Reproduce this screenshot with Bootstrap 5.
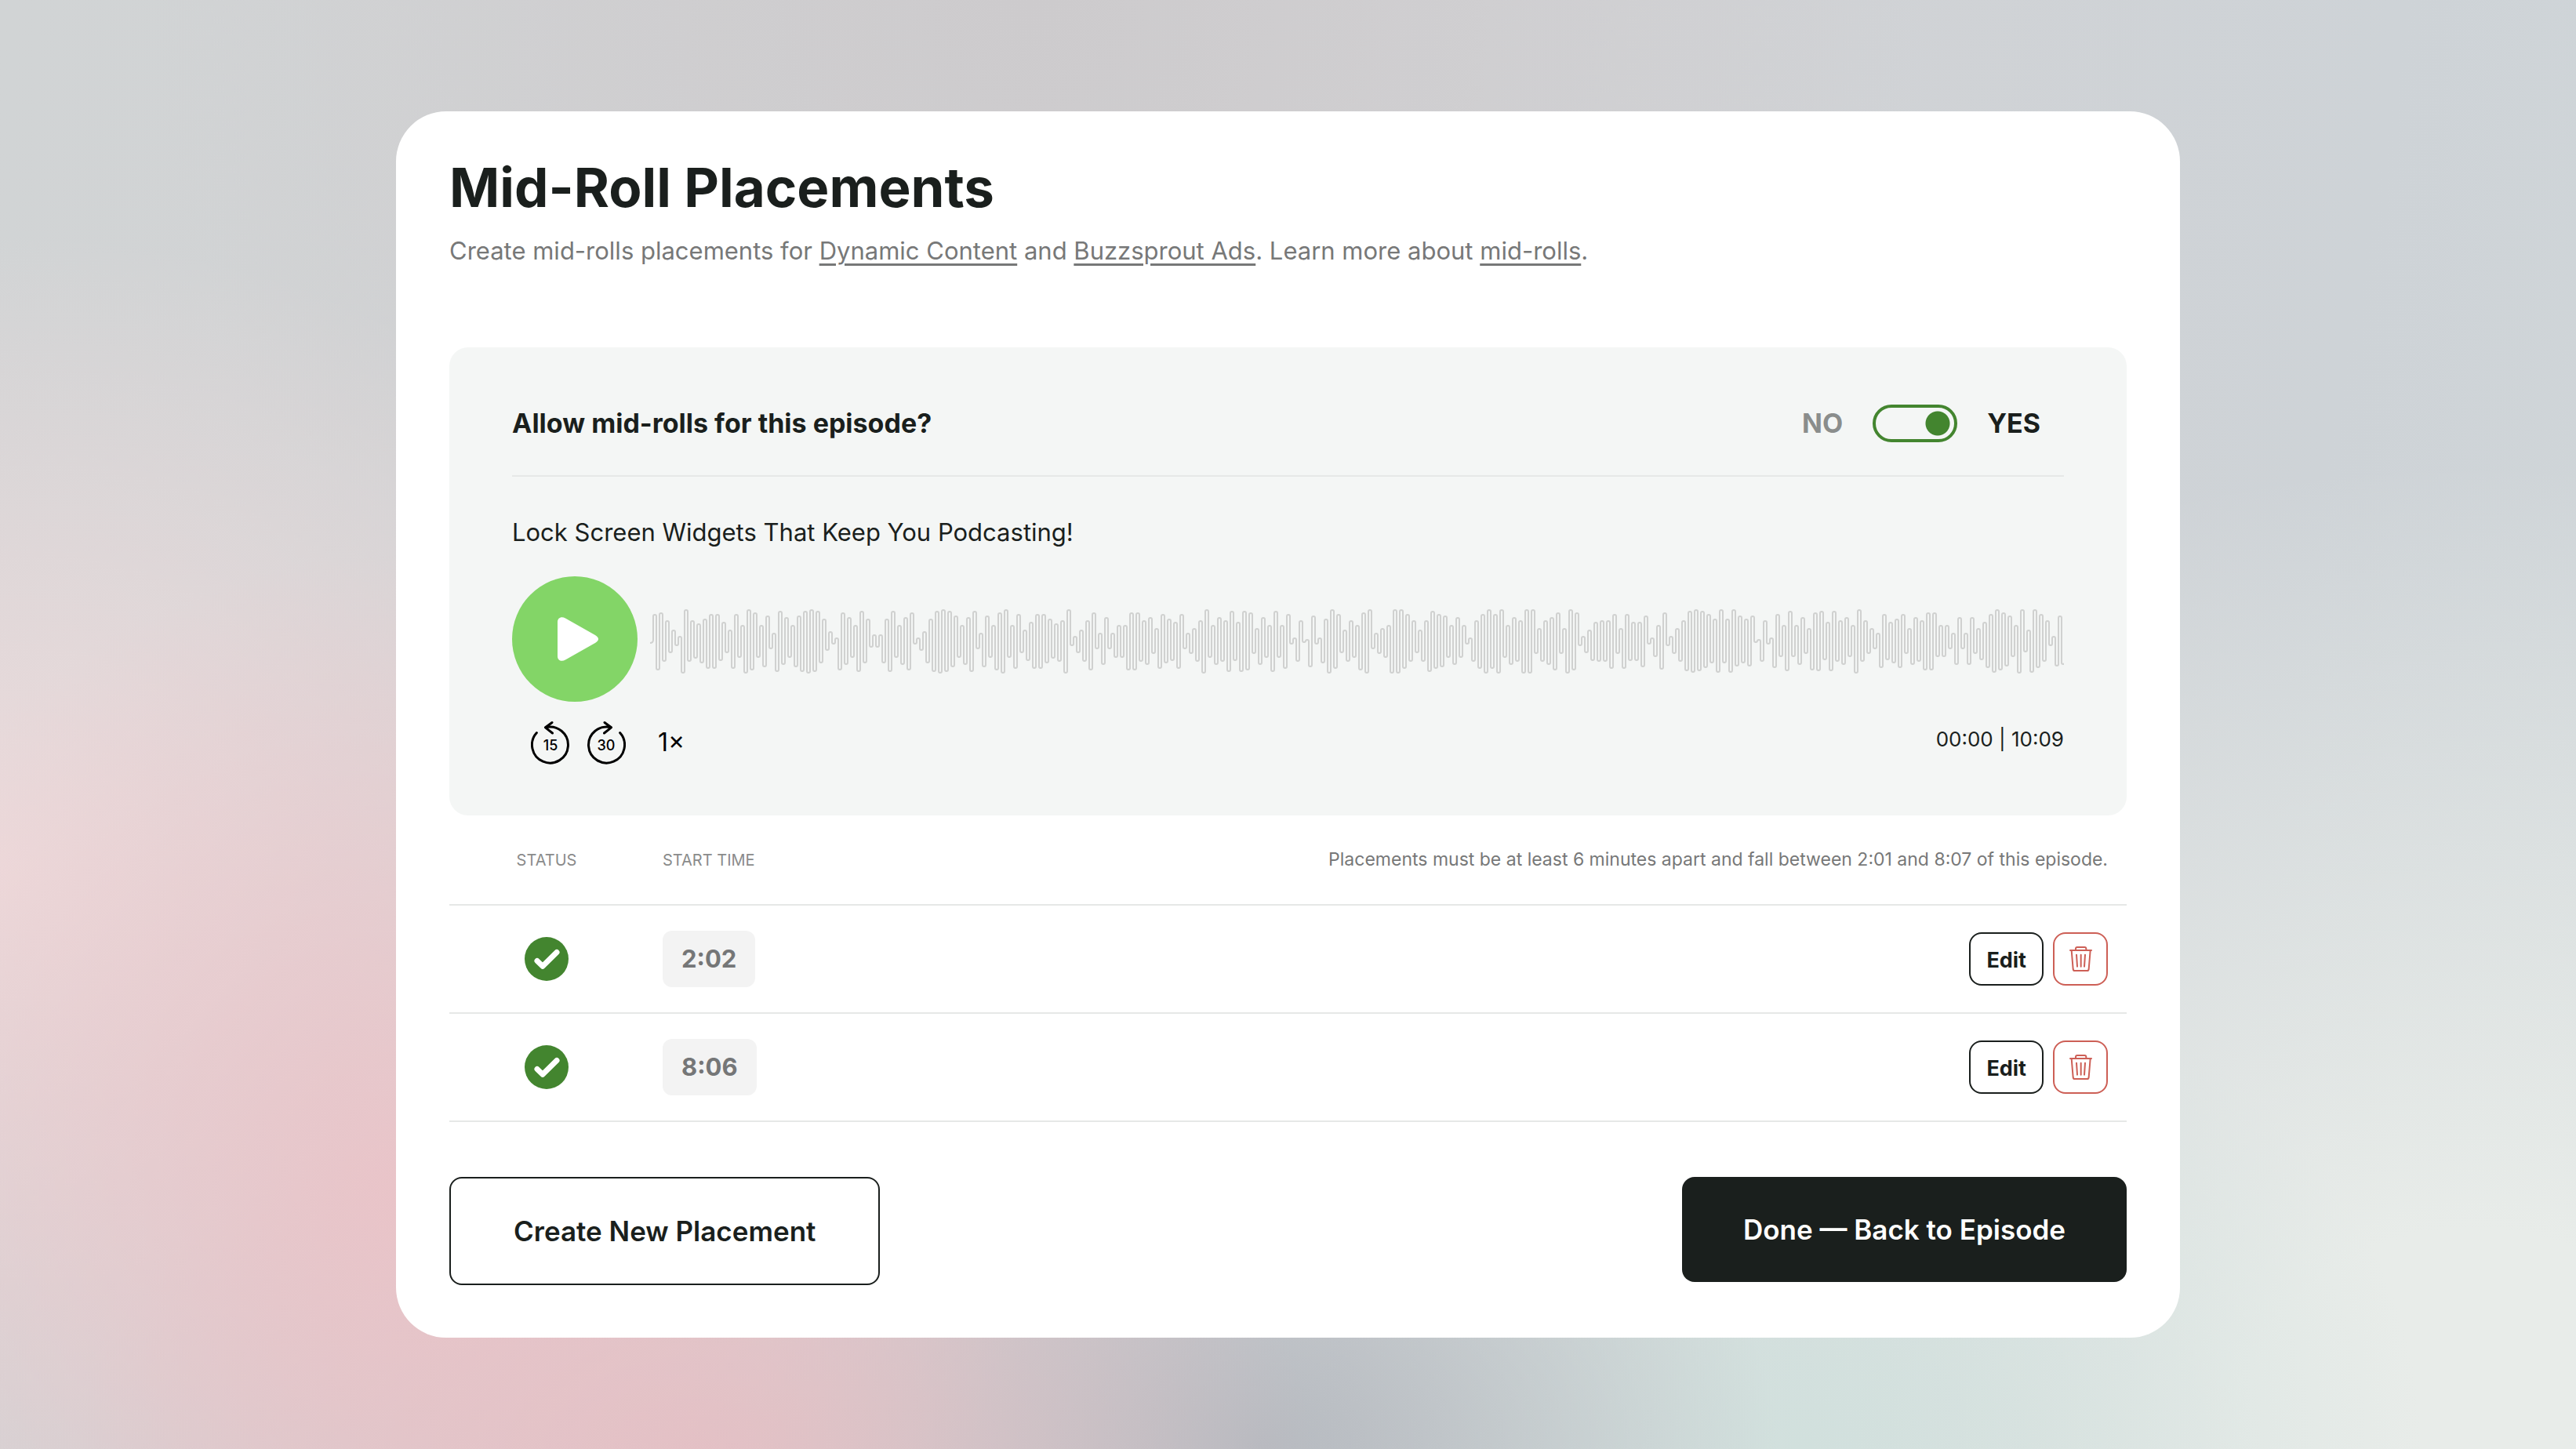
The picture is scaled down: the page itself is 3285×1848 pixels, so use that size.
<!DOCTYPE html>
<html lang="en">
<head>
<meta charset="utf-8">
<meta name="viewport" content="width=device-width, initial-scale=1">
<title>Mid-Roll Placements</title>
<link href="https://cdn.jsdelivr.net/npm/bootstrap@5.3.0/dist/css/bootstrap.min.css" rel="stylesheet">
<style>
  :root { --ink: #1a1f1d; --muted: #777878; --rule: #e6e8e7; --leaf: #43852f; --danger: #cd5f56; }
  body {
    font-family: Inter, "Liberation Sans", sans-serif;
    color: var(--ink);
    background:
      radial-gradient(ellipse 24% 44% at 16% 82%, rgba(235, 194, 199, .9), rgba(235, 194, 199, 0)),
      radial-gradient(ellipse 24% 26% at 27% 100%, rgba(226, 188, 193, .85), rgba(226, 188, 193, 0)),
      radial-gradient(ellipse 30% 44% at 0% 60%, rgba(238, 219, 220, .95), rgba(238, 219, 220, 0)),
      radial-gradient(ellipse 20% 26% at 49% 100%, rgba(182, 186, 192, 1), rgba(182, 186, 192, 0)),
      radial-gradient(ellipse 24% 36% at 70% 100%, rgba(209, 224, 221, 1), rgba(209, 224, 221, 0)),
      radial-gradient(ellipse 44% 66% at 96% 98%, rgba(232, 236, 233, 1) 20%, rgba(232, 236, 233, 0)),
      radial-gradient(ellipse 34% 60% at 40% 0%, rgba(205, 203, 205, 1), rgba(205, 203, 205, 0)),
      linear-gradient(100deg, #d1d4d5, #d3d2d4 45%, #ced3d7 85%, #d0d6d9);
  }
  .sheet { max-width: 2275px; border-radius: 64px; padding: 58px 68px 67px; }
  .sheet-title { font-size: 69px; line-height: 78px; font-weight: 700; margin-bottom: 18px; }
  .sheet-intro { font-size: 31px; line-height: 48px; color: var(--muted); margin-bottom: 99px; }
  .sheet-intro a { color: inherit; text-decoration-thickness: 3px; text-underline-offset: 5px; }
  .player { background: #f4f6f5; border-radius: 24px; padding: 73px 80px 65px; }
  .player-head { font-size: 34px; font-weight: 700; line-height: 48px; padding-bottom: 42px; border-bottom: 2px solid var(--rule); }
  .choice { gap: 38px; padding-right: 30px; }
  .choice-off { color: #8a8d8c; }
  .switch {
    appearance: none; width: 108px; height: 48px; margin: 0;
    border: 4px solid var(--leaf); border-radius: 24px;
    background: radial-gradient(circle 15px at 21px 50%, var(--leaf) 14px, transparent 15px);
  }
  .switch:checked { background: radial-gradient(circle 16px at 79px 50%, var(--leaf) 15px, transparent 16px); }
  .episode { font-size: 31px; line-height: 48px; margin: 47px 0 32px; }
  .play { width: 160px; height: 160px; background: #83d567; }
  .play svg { width: 52px; height: 56px; margin-left: 8px; }
  .wave { height: 88px; min-width: 0; }
  .controls { margin-top: 24px; padding-left: 24px; line-height: 48px; }
  .skip { width: 50px; height: 56px; margin-right: 21px; }
  .skip svg { width: 50px; height: 56px; }
  .skip text { font-size: 18px; font-weight: 500; }
  .speed { height: 56px; font-size: 32px; margin-left: 20px; color: #000; }
  .clock { font-size: 26px; }
  .slots { border-collapse: separate; border-spacing: 0; }
  .slots th, .slots td { border-bottom: 2px solid var(--rule); padding: 0 24px; height: 138px; vertical-align: middle; }
  .slots th { height: 115px; font-size: 20px; font-weight: 400; color: #8a8b8b; }
  .slots .slot-status { width: 248px; text-align: center; }
  .slots .slot-note { font-size: 23px; color: var(--muted); text-align: right; }
  .slot-ok { width: 56px; height: 56px; }
  .stamp { display: inline-block; background: #f3f3f3; color: #757677; border-radius: 12px; padding: 0 24px; font-size: 31px; line-height: 72px; font-weight: 700; }
  .slot-actions { gap: 12px; }
  .slot-btn { height: 68px; border: 2px solid var(--ink); border-radius: 16px; font-size: 27px; font-weight: 700; color: var(--ink); padding: 4px 20px 0; }
  .slot-bin { border-color: var(--danger); color: var(--danger); width: 70px; padding: 0; }
  .slot-bin svg { width: 29px; height: 32px; }
  .foot { margin-top: 70px; }
  .foot-btn { font-size: 35px; font-weight: 600; border-radius: 16px; border: 0; height: 134px; padding: 0 78px; background: var(--ink); color: #fff; }
  .foot-line { height: 138px; border: 2px solid var(--ink); background: #fff; color: var(--ink); padding: 0 80px; }
</style>
</head>
<body>
<svg class="d-none" xmlns="http://www.w3.org/2000/svg">
  <symbol id="tick" viewBox="0 0 56 56">
    <circle cx="28" cy="28" r="28" fill="#43852f"/>
    <path d="M16 30.500 23 37.300 41 19.500" fill="none" stroke="#fff" stroke-width="7" stroke-linecap="round" stroke-linejoin="round"/>
  </symbol>
  <symbol id="bin" viewBox="0 0 87 96">
    <g fill="none" stroke="currentColor" stroke-width="6" stroke-linecap="round" stroke-linejoin="round">
      <path d="M3 15H84M24 15V9Q24 3 30 3H58Q64 3 64 9V15M8 15 14 87Q15 93 20 93H68Q73 93 74 87L80 15"/>
      <path d="M27 32 30 77M44 32V77M60 32 57 77"/>
    </g>
  </symbol>
</svg>
<div class="min-vh-100 d-flex align-items-center justify-content-center">
  <main class="sheet bg-white w-100">
    <h1 class="sheet-title">Mid-Roll Placements</h1>
    <p class="sheet-intro">Create mid-rolls placements for <a href="#">Dynamic Content</a> and <a href="#">Buzzsprout Ads</a>. Learn more about <a href="#">mid-rolls</a>.</p>

    <section class="player">
      <div class="player-head d-flex justify-content-between align-items-center">
        <label for="allow">Allow mid-rolls for this episode?</label>
        <div class="choice d-flex align-items-center">
          <span class="choice-off">NO</span>
          <input class="switch" type="checkbox" role="switch" id="allow" checked>
          <span>YES</span>
        </div>
      </div>
      <p class="episode">Lock Screen Widgets That Keep You Podcasting!</p>
      <div class="d-flex align-items-center gap-3">
        <button type="button" class="play btn rounded-circle border-0 p-0 flex-shrink-0 d-flex align-items-center justify-content-center" aria-label="Play">
          <svg viewBox="0 0 52 56"><path d="M0 6C0 1 5-1.500 10 1.500L48 23Q56 28 48 33L10 54.500C5 57.500 0 55 0 50Z" fill="#fff"/></svg>
        </button>
        <svg class="wave flex-grow-1" aria-hidden="true"><path id="wave" fill="none" stroke="#d0d1d0" stroke-width="2"/></svg>
      </div>
      <div class="controls d-flex align-items-start">
        <button type="button" class="skip btn border-0 p-0 d-flex" aria-label="Back 15 seconds">
          <svg viewBox="0 0 50 56"><path d="M18.500 8.800A23 23 0 1 1 7.400 15.600M27 2.500 18.500 8.800 27.500 16" fill="none" stroke="#000" stroke-width="3" stroke-linecap="round" stroke-linejoin="round"/><text x="25" y="38" text-anchor="middle">15</text></svg>
        </button>
        <button type="button" class="skip btn border-0 p-0 d-flex" aria-label="Forward 30 seconds">
          <svg viewBox="0 0 50 56"><path d="M31.500 8.800A23 23 0 1 0 42.600 15.600M23 2.500 31.500 8.800 22.500 16" fill="none" stroke="#000" stroke-width="3" stroke-linecap="round" stroke-linejoin="round"/><text x="25" y="38" text-anchor="middle">30</text></svg>
        </button>
        <button type="button" class="speed btn border-0 p-0">1×</button>
        <span class="clock ms-auto">00:00 | 10:09</span>
      </div>
    </section>

    <table class="slots w-100">
      <thead>
        <tr><th class="slot-status">STATUS</th><th>START TIME</th><th class="slot-note">Placements must be at least 6 minutes apart and fall between 2:01 and 8:07 of this episode.</th></tr>
      </thead>
      <tbody>
        <tr>
          <td class="slot-status"><svg class="slot-ok" role="img" aria-label="Active"><use href="#tick"/></svg></td>
          <td><span class="stamp">2:02</span></td>
          <td><div class="slot-actions d-flex justify-content-end"><button type="button" class="slot-btn btn">Edit</button><button type="button" class="slot-btn slot-bin btn d-flex align-items-center justify-content-center" aria-label="Delete"><svg><use href="#bin"/></svg></button></div></td>
        </tr>
        <tr>
          <td class="slot-status"><svg class="slot-ok" role="img" aria-label="Active"><use href="#tick"/></svg></td>
          <td><span class="stamp">8:06</span></td>
          <td><div class="slot-actions d-flex justify-content-end"><button type="button" class="slot-btn btn">Edit</button><button type="button" class="slot-btn slot-bin btn d-flex align-items-center justify-content-center" aria-label="Delete"><svg><use href="#bin"/></svg></button></div></td>
        </tr>
      </tbody>
    </table>

    <div class="foot d-flex justify-content-between align-items-start">
      <button type="button" class="foot-btn foot-line btn">Create New Placement</button>
      <button type="button" class="foot-btn btn">Done — Back to Episode</button>
    </div>
  </main>
</div>
<script src="https://cdn.jsdelivr.net/npm/bootstrap@5.3.0/dist/js/bootstrap.bundle.min.js"></script>
<script>
  // Peak heights of the episode's audio, one for every 8px of track, in thirds of a pixel from the top.
  const peaks = [
    72,66,97,132,157,54,97,109,91,72,72,102,132,72,114,54,66,114,78,145,60,85,114,78,60,54,60,91,139,163,
    66,85,114,60,91,151,151,91,60,114,85,66,163,139,91,60,54,60,78,114,85,60,145,78,114,66,54,114,72,132,
    102,72,72,91,109,97,54,157,132,97,66,145,85,145,114,114,66,66,97,85,127,72,91,102,72,145,127,97,54,114,
    85,97,60,102,60,66,127,85,114,60,114,72,163,97,169,78,163,91,54,72,132,97,114,66,54,145,127,114,54,54,
    72,97,132,97,60,72,78,114,85,114,163,97,72,54,72,54,114,85,97,54,54,127,97,85,66,127,54,66,157,132,
    102,97,97,72,127,72,102,102,78,163,115,67,157,127,97,61,55,61,73,91,55,91,55,79,91,79,169,97,163,73,
    115,61,115,85,127,66,61,103,61,97,85,115,54,97,127,145,73,103,91,73,127,85,97,66,66,115,115,145,85,145,
    85,127,103,73,55,66,79,115,54,133,55,73,97,157,79,85,72];
  let d = "M0 49q4 0 4-4";
  for (let i = 0; i < peaks.length - 1; i++) {
    const top = Math.round(peaks[i] / 3) - 9;
    const bottom = Math.round((353 - peaks[i + 1]) / 3) - 15;
    d += `V${top}a2 2 0 0 1 4 0V${bottom}a2 2 0 0 0 4 0`;
  }
  document.getElementById("wave").setAttribute("d", d);
</script>
</body>
</html>
